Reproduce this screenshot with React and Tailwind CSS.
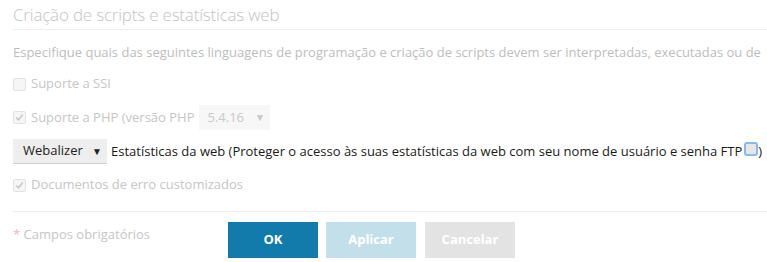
import React from 'react';

const font = { fontFamily: '"Open Sans", sans-serif' };

function Box({ checked, focus }) {
    if (focus) {
        return (
            <span className="inline-block w-[14px] h-[14px] rounded-[3px] border-2 border-[#8bb8ec] bg-[#e6e6e6] shrink-0" />
        );
    }
    return (
        <span className="relative inline-flex items-center justify-center w-[13px] h-[13px] rounded-[2px] border border-[#e2e2e2] bg-[#f6f6f6] shrink-0">
            {checked && (
                <svg width="9" height="9" viewBox="0 0 10 10">
                    <path d="M1.5 5.2 L4 7.6 L8.6 1.8" fill="none" stroke="#c9c9c9" strokeWidth="1.8" />
                </svg>
            )}
        </span>
    );
}

export default function App() {
    return (
        <div className="w-[767px] h-[262px] overflow-hidden bg-white pl-[13px]" style={font}>
            <div className="pt-[3px] pb-[2px] border-b border-[#eeeeee] text-[17px] font-light tracking-[-0.2px] leading-[24px] text-[#c4c4c4] whitespace-nowrap">
                Criação de scripts e estatísticas web
            </div>

            <div className="mt-[13px] h-[18px] text-[13px] leading-[18px] text-[#bdbdbd] whitespace-nowrap">
                Especifique quais das seguintes linguagens de programação e criação de scripts devem ser interpretadas, executadas ou de
            </div>

            <div className="mt-[13px] h-[20px] flex items-center gap-[5px] text-[13px] text-[#c6c6c6]">
                <Box />
                <span>Suporte a SSI</span>
            </div>

            <div className="mt-[11px] h-[25px] flex items-center text-[13px] text-[#c6c6c6]">
                <Box checked />
                <span className="ml-[5px]">Suporte a PHP (versão PHP</span>
                <span className="ml-[5px] h-[25px] w-[71px] bg-[#f7f7f7] flex items-center pl-[8px] text-[#c9c9c9]">
                    5.4.16
                    <span className="ml-[11px] text-[10px]">▼</span>
                </span>
            </div>

            <div className="mt-[9px] h-[25px] flex items-center text-[13px] whitespace-nowrap">
                <span className="h-[25px] w-[94px] bg-[#eeeeee] border-b border-[#cfcfcf] flex items-center pl-[10px] text-[#222]">
                    Webalizer
                    <span className="ml-auto mr-[5px] text-[10px]">▼</span>
                </span>
                <span className="ml-[4px] text-[#1a1a1a]">Estatísticas da web (Proteger o acesso às suas estatísticas da web com seu nome de usuário e senha FTP</span>
                <span className="ml-[2px]"><Box focus /></span>
                <span className="text-[#1a1a1a]">)</span>
            </div>

            <div className="mt-[11px] h-[20px] flex items-center gap-[5px] text-[13px] text-[#c6c6c6]">
                <Box checked />
                <span>Documentos de erro customizados</span>
            </div>

            <div className="mt-[16px] border-t border-[#eeeeee] pt-[10px] flex">
                <div className="w-[215px] pt-[3px] text-[13px] leading-[18px] text-[#c6c6c6]">
                    <span className="text-[#f0b4b4]">*</span> Campos obrigatórios
                </div>
                <div className="flex gap-[8px] text-[13px] font-bold text-white">
                    <button className="w-[90px] h-[36px] bg-[#127bab]">OK</button>
                    <button className="w-[90px] h-[36px] bg-[#c3dfea]">Aplicar</button>
                    <button className="w-[90px] h-[36px] bg-[#e3e3e3] ml-[1px]">Cancelar</button>
                </div>
            </div>
        </div>
    );
}
